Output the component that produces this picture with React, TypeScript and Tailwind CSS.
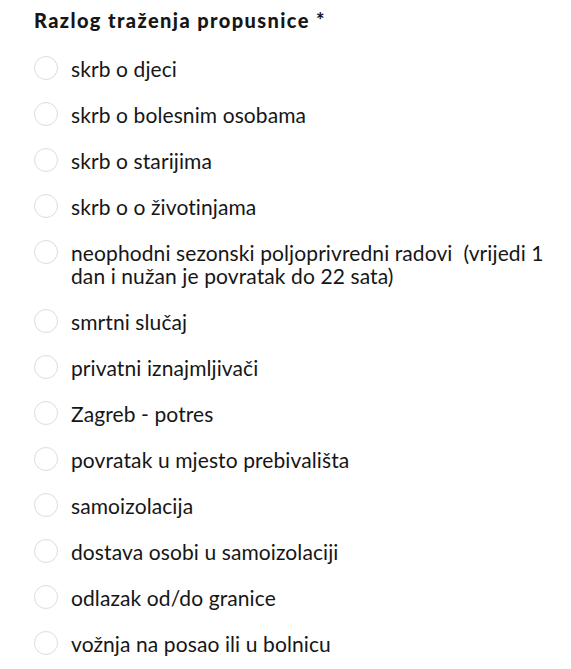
import React from 'react';

const options = [
  'skrb o djeci',
  'skrb o bolesnim osobama',
  'skrb o starijima',
  'skrb o o životinjama',
  'neophodni sezonski poljoprivredni radovi\u00a0 (vrijedi 1 dan i nužan je povratak do 22 sata)',
  'smrtni slučaj',
  'privatni iznajmljivači',
  'Zagreb - potres',
  'povratak u mjesto prebivališta',
  'samoizolacija',
  'dostava osobi u samoizolaciji',
  'odlazak od/do granice',
  'vožnja na posao ili u bolnicu',
];

const App = () => {
  return (
    <div className="min-h-screen bg-white pl-[34px] pr-[24px] pt-[8px] font-['Lato',sans-serif] text-[#161616]">
      <h2 className="text-[20px] font-black leading-[24px] tracking-[1.4px]">
        Razlog traženja propusnice *
      </h2>
      <ul className="mt-[25px] flex flex-col gap-[23px]">
        {options.map((label) => (
          <li key={label} className="flex items-start gap-[13px]">
            <span className="mt-[-1px] h-[24px] w-[24px] shrink-0 rounded-full border border-[#dcdcdc] bg-white" />
            <span className="text-[21px] leading-[23px] tracking-[0.1px]">{label}</span>
          </li>
        ))}
      </ul>
    </div>
  );
};

export default App;
